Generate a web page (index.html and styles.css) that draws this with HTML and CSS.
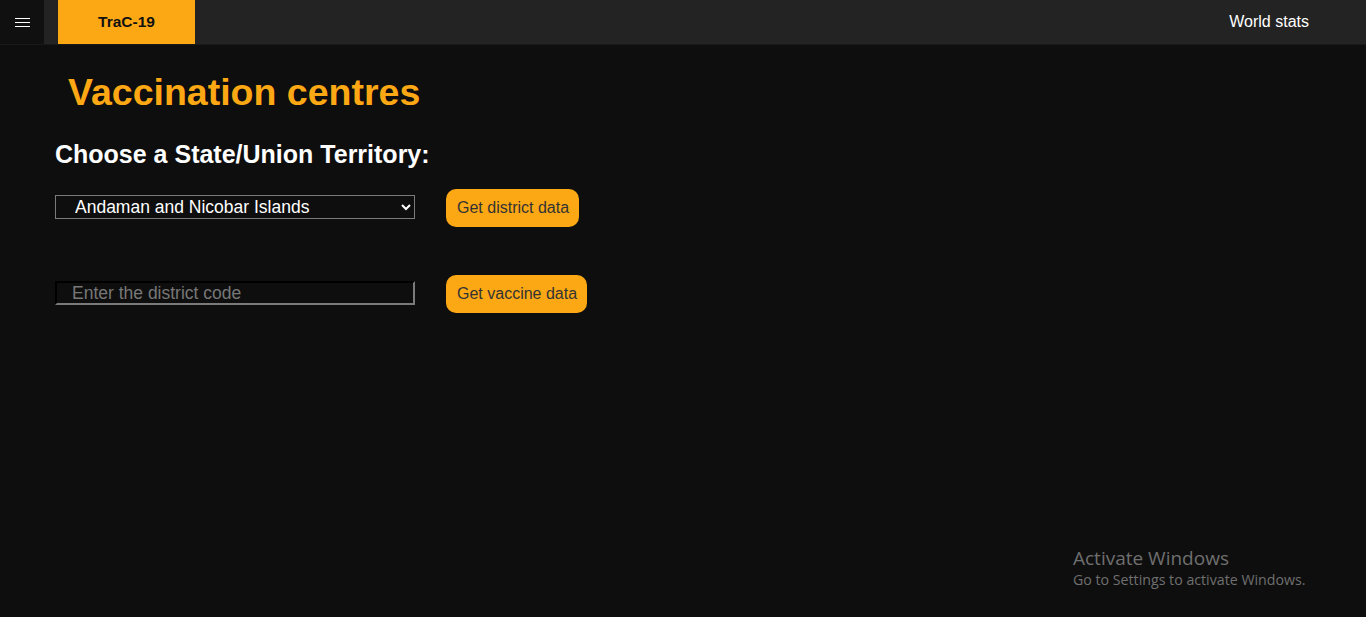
FILE: index.html
```html
<!DOCTYPE html>
<html lang="en">
<head>
<meta charset="utf-8">
<title>TraC-19 - Vaccination centres</title>
<link rel="stylesheet" href="styles.css">
</head>
<body>
<nav class="topbar">
  <button class="menu-btn" aria-label="Menu">
    <svg width="15" height="10" viewBox="0 0 15 10"><path d="M0 0.5H15M0 4.5H15M0 8.5H15" stroke="#fff" stroke-width="1.2"/></svg>
  </button>
  <a class="brand">TraC-19</a>
  <div class="spacer"></div>
  <a class="nav-link">World stats</a>
</nav>
<main class="content">
  <h1 class="title">Vaccination centres</h1>
  <h2 class="subtitle">Choose a State/Union Territory:</h2>
  <div class="row">
    <select class="field select">
      <option>Andaman and Nicobar Islands</option>
    </select>
    <button class="action">Get district data</button>
  </div>
  <div class="row row-second">
    <input class="field input" type="text" placeholder="Enter the district code">
    <button class="action">Get vaccine data</button>
  </div>
</main>
<div class="watermark">
  <div class="wm-title">Activate Windows</div>
  <div class="wm-sub">Go to Settings to activate Windows.</div>
</div>
</body>
</html>
```

FILE: styles.css
```css
* { box-sizing: border-box; }
html, body {
  margin: 0;
  height: 100%;
  background: #0e0e0e;
  font-family: "Liberation Sans", Arial, sans-serif;
  overflow: hidden;
}
.topbar {
  display: flex;
  align-items: stretch;
  height: 45px;
  background: #232323;
  border-bottom: 1px solid #191919;
}
.menu-btn {
  width: 44px;
  border: 0;
  padding: 0;
  background: #101010;
  display: flex;
  align-items: center;
  justify-content: center;
  cursor: pointer;
}
.menu-btn svg { display: block; margin-top: 1px; }
.brand {
  margin-left: 14px;
  width: 137px;
  background: #fca814;
  color: #111;
  font-weight: bold;
  font-size: 15.5px;
  display: flex;
  align-items: center;
  justify-content: center;
}
.spacer { flex: 1; }
.nav-link {
  color: #fff;
  font-size: 16px;
  display: flex;
  align-items: center;
  padding: 0 57px 0 0;
}
.content {
  padding: 0 0 0 55px;
}
.title {
  margin: 27px 0 0 13px;
  color: #fca814;
  font-size: 37.5px;
  line-height: 40px;
  font-weight: bold;
}
.subtitle {
  margin: 28px 0 0 0;
  color: #fff;
  font-size: 25px;
  line-height: 28px;
  font-weight: bold;
}
.row {
  display: flex;
  align-items: center;
  gap: 31px;
  margin-top: 19px;
}
.row-second { margin-top: 46px; }
.field {
  width: 360px;
  height: 24px;
  background: #0e0e0e;
  color: #fff;
  font-family: "Liberation Sans", Arial, sans-serif;
  font-size: 17.5px;
  outline: none;
}
.select {
  border: 1px solid #7a7a7a;
  padding: 0 0 0 15px;
  appearance: auto;
}
.select option { background: #0e0e0e; }
.input {
  border: 2px inset #777;
  border-top-color: #2c2c2c;
  border-left-color: #2c2c2c;
  border-right-color: #7a7a7a;
  border-bottom-color: #7a7a7a;
  padding: 0 0 0 15px;
}
.input::placeholder { color: #777; }
.action {
  height: 38px;
  margin-top: 2px;
  padding: 0 10px 0 11px;
  border: 0;
  border-radius: 10px;
  background: #fca814;
  color: #333;
  font-family: "Liberation Sans", Arial, sans-serif;
  font-size: 16px;
  cursor: pointer;
}
.watermark {
  position: absolute;
  left: 1073px;
  top: 546px;
  color: #6f6f6f;
  font-family: "Open Sans", "Noto Sans", sans-serif;
}
.wm-title { font-size: 19px; line-height: 24px; }
.wm-sub { font-size: 14.2px; line-height: 20px; }
```
